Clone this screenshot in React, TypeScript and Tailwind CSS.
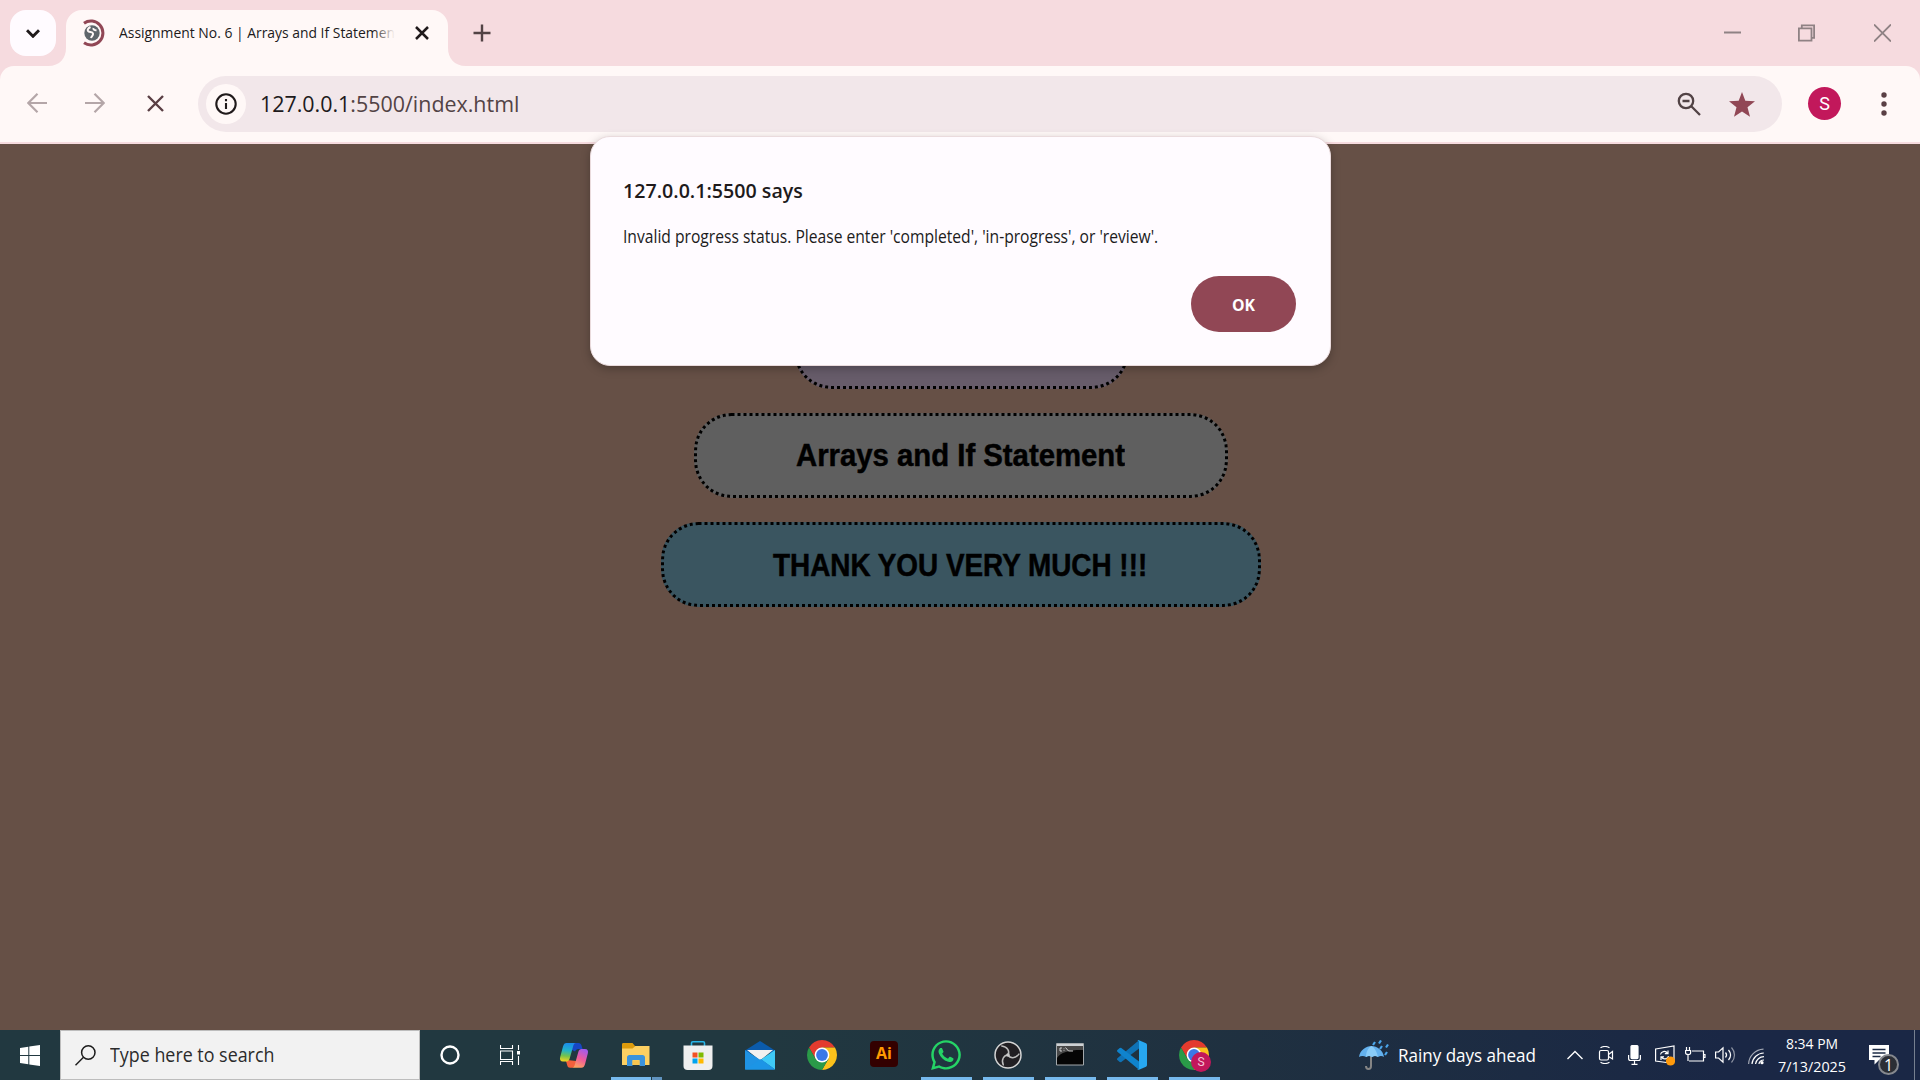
import React, { useLayoutEffect, useRef, useState } from "react";
import { FaWhatsapp } from "react-icons/fa";

/** A single line of text, condensed or widened to fill exactly `w` pixels. */
function Line({ w, className = "", children }: { w: number; className?: string; children: React.ReactNode }) {
  const ref = useRef<HTMLSpanElement>(null);
  const [scale, setScale] = useState(1);
  useLayoutEffect(() => {
    if (ref.current) setScale(w / ref.current.offsetWidth);
  }, [w]);
  return (
    <span className={"block shrink-0 whitespace-nowrap " + className} style={{ width: w }}>
      <span ref={ref} className="inline-block origin-left" style={{ transform: `scaleX(${scale})` }}>
        {children}
      </span>
    </span>
  );
}

function ChromeLogo() {
  return (
    <svg width="30" height="30" viewBox="0 0 30 30">
      <path d="M2.01 7.5A15 15 0 0 1 27.99 7.5H15L8.5 18.75Z" fill="#e33b2e" />
      <path d="M27.99 7.5A15 15 0 0 1 15 30L21.5 18.75 15 7.5Z" fill="#fcc21b" />
      <path d="M15 30A15 15 0 0 1 2.01 7.5L8.5 18.75H21.5Z" fill="#2a9a48" />
      <circle cx="15" cy="15" r="7.4" fill="#fff" />
      <circle cx="15" cy="15" r="5.9" fill="#3b78e7" />
    </svg>
  );
}

function Copilot() {
  return (
    <svg width="30" height="30" viewBox="0 0 30 30">
      <defs>
        <linearGradient id="cpL" x1="0.4" y1="0" x2="0.3" y2="1">
          <stop offset="0" stopColor="#1b8bea" />
          <stop offset="0.4" stopColor="#22b3c9" />
          <stop offset="0.7" stopColor="#75c24c" />
          <stop offset="1" stopColor="#f6d51f" />
        </linearGradient>
        <linearGradient id="cpR" x1="0.7" y1="0" x2="0.3" y2="1">
          <stop offset="0" stopColor="#a25bec" />
          <stop offset="0.5" stopColor="#ee5a9c" />
          <stop offset="1" stopColor="#ffa45c" />
        </linearGradient>
      </defs>
      <path d="M11 3h8.500c1.700 0 2.500 1 3 2.500L23.600 9h-4c-2 0-3 1-3.500 2.500L13 10Z" fill="#1746c4" />
      <path d="M8 20l9.500 1-1.500 5c-.5 1.300-1.300 1.700-2.500 1.700h-2.500c-1.500 0-2.300-1-2.700-2.300L7 21Z" fill="#f4603c" />
      <path d="M7.500 3h9.500c-1.500 0-2.200 1.200-2.700 2.800L10.700 18.500C10.200 20.500 9 21.500 7.500 21.500H4C1.500 21.500.4 19.700 1.200 17L4 6.500C4.700 4 5.800 3 7.500 3Z" fill="url(#cpL)" />
      <path d="M22.500 27.700H13c1.500 0 2.200-1.200 2.700-2.800L19.300 12c.5-2 1.700-3 3.200-3H26c2.500 0 3.600 1.800 2.800 4.500L26 24.200C25.300 26.700 24.200 27.700 22.500 27.700Z" fill="url(#cpR)" />
    </svg>
  );
}

function Explorer() {
  return (
    <svg width="30" height="30" viewBox="0 0 30 30">
      <path d="M1 4.500c0-.8.500-1.500 1.300-1.500h9.200l2.500 3H27v5H1Z" fill="#dd9b0c" />
      <path d="M1 8.500h10.500L14.500 6H28.500V25H1Z" fill="#fdd062" />
      <path d="M6 26V17.500C6 16 7 15 8.500 15h13c1.500 0 2.500 1 2.500 2.500V26h-5.500v-6h-7v6Z" fill="#3b93dc" />
      <path d="M11.500 20.500h7v4.500h-7Z" fill="#f7c650" />
    </svg>
  );
}

function Store() {
  return (
    <svg width="30" height="30" viewBox="0 0 30 30">
      <path d="M8.500 7V3c0-1 .4-1.300 1.300-1.300h10.400c.9 0 1.300.3 1.300 1.300v4" fill="none" stroke="#28b5e8" strokeWidth="1.600" />
      <path d="M.5 5.500h29V26c0 2.500-1.500 4-4 4h-21c-2.500 0-4-1.500-4-4Z" fill="#efefef" />
      <path d="M9.500 12.500h5v5h-5Z" fill="#f25022" />
      <path d="M15.500 12.500h5v5h-5Z" fill="#7fba00" />
      <path d="M9.500 18.500h5v5h-5Z" fill="#00a4ef" />
      <path d="M15.500 18.500h5v5h-5Z" fill="#ffb900" />
    </svg>
  );
}

function Mail() {
  return (
    <svg width="30" height="30" viewBox="0 0 30 30">
      <path d="M0 10.500L15 1l15 9.500V13H0Z" fill="#0b5bab" />
      <path d="M2 10h26L15 20.500Z" fill="#f3f1f0" />
      <path d="M0 10L30 29.500H0Z" fill="#1f93e4" />
      <path d="M30 10V29.500L16 19.500Z" fill="#3fcaf7" />
      <path d="M0 29.500L16 19 30 29.500Z" fill="#1c95e6" />
    </svg>
  );
}

function Obs() {
  return (
    <svg width="30" height="30" viewBox="0 0 30 30">
      <circle cx="15" cy="15" r="13" fill="#211f23" stroke="#d4d4d4" strokeWidth="1.500" />
      <g fill="none" stroke="#bdbdbd" strokeWidth="1.500" strokeLinecap="round">
        <path d="M15 15C17 11.500 14.500 6.500 8.800 6" />
        <path d="M15 15C17 11.500 14.500 6.500 8.800 6" transform="rotate(120 15 15)" />
        <path d="M15 15C17 11.500 14.500 6.500 8.800 6" transform="rotate(240 15 15)" />
      </g>
      <circle cx="15" cy="15" r="1.800" fill="#c9c9c9" />
    </svg>
  );
}

function Terminal() {
  return (
    <svg width="30" height="30" viewBox="0 0 30 30">
      <path d="M1.500 3.500h27v21.500h-27Z" fill="#050505" stroke="#a3a8ab" strokeWidth="1" />
      <path d="M2 6h26v4C17 9.500 5 12 2 18Z" fill="#474747" />
      <path d="M2 4h26v2H2Z" fill="#cdd1d4" />
      <path d="M7 8H5v3h2M9 8.500v.7M9 10.300v.7M10.500 7.500l3 3.500M13.500 11h4.500" fill="none" stroke="#ddd" strokeWidth="0.900" />
    </svg>
  );
}

function VsCode() {
  return (
    <svg width="30" height="30" viewBox="0 0 30 30">
      <path d="M22 0.300V8.500L4 22.200 2.700 22 .4 20c-.5-.5-.5-1.200 0-1.700Z" fill="#0f72b5" />
      <path d="M22 29.700V21.500L4 7.800 2.700 8 .4 10c-.5.500-.5 1.200 0 1.700Z" fill="#0f83cd" />
      <path d="M22 .2L29 3.300c.7.400 1 .9 1 1.700v20c0 .8-.3 1.300-1 1.700L22 29.800c-.8.300-1.300.1-1.800-.4C21.500 30 22 29 22 28V2C22 1 21.500 0 20.200.6 20.700.1 21.200-.1 22 .2Z" fill="#27a7f0" />
    </svg>
  );
}

function AppCell({ running, children }: { running?: boolean; children?: React.ReactNode }) {
  return (
    <div className="relative flex h-full w-[62px] shrink-0 items-center justify-center">
      {children}
      {running && <span className="absolute bottom-0 left-[6px] h-[3px] w-[51px] bg-[#76b9ed]" />}
    </div>
  );
}

function TabStrip() {
  return (
    <div className="flex h-[66px] shrink-0 bg-[#f6dbdf]">
      <div className="ml-[10px] mt-[10px] flex h-[46px] w-[46px] items-center justify-center rounded-2xl bg-[#fffbff]">
        <svg width="14" height="9" viewBox="0 0 14 9" fill="none" stroke="#201a1b" strokeWidth="2.900">
          <path d="M1 1.300l6 6 6-6" />
        </svg>
      </div>
      <svg className="-ml-2 mt-auto" width="18" height="18" viewBox="0 0 18 18">
        <path d="M18 0v18H0C12 18 18 10 18 0Z" fill="#fff8f7" />
      </svg>
      <div className="mt-[10px] flex h-[56px] w-[382px] items-start rounded-t-[16px] bg-[#fff8f7] pl-[17px]">
        <svg className="mt-[9px] shrink-0" width="24" height="28" viewBox="0 0 24 28">
          <circle cx="9" cy="14" r="7.700" fill="#5f666b" />
          <path d="M7.500 8c-2 1-3.500 2.500-2.500 4s4.500.5 5 2.500-1.500 2.500-2 4.500M10.500 9c-.5 1.500 1 2.500 3 2.300" fill="none" stroke="#fff8f7" strokeWidth="2" />
          <path d="M1 4.200A12 12 0 1 1 1 23.800" fill="none" stroke="#914755" strokeWidth="3" />
        </svg>
        <div className="relative ml-[12px] mt-[10px] w-[276px] overflow-hidden text-[15px] leading-[24px] text-[#201a1b]">
          <Line w={276}>Assignment No. 6 | Arrays and If Statemen</Line>
          <span className="absolute right-0 top-0 h-full w-[22px] bg-gradient-to-r from-[#fff8f7]/0 to-[#fff8f7]" />
        </div>
        <svg className="ml-[20px] mt-[16px]" width="14" height="14" viewBox="0 0 14 14" stroke="#201a1b" strokeWidth="2.500">
          <path d="M1 1l12 12M13 1L1 13" />
        </svg>
      </div>
      <svg className="mt-auto" width="18" height="18" viewBox="0 0 18 18">
        <path d="M0 0v18H18C6 18 0 10 0 0Z" fill="#fff8f7" />
      </svg>
      <svg className="ml-[7px] mt-[24px]" width="18" height="18" viewBox="0 0 18 18" stroke="#524345" strokeWidth="2.400">
        <path d="M9 .5v17M.5 9h17" />
      </svg>
      <div className="ml-auto mr-[29px] flex h-[65px] items-center gap-[57px] text-[#8f8284]">
        <svg width="17" height="18" viewBox="0 0 17 18" stroke="currentColor" strokeWidth="2">
          <path d="M0 8.500h17" />
        </svg>
        <svg width="17" height="18" viewBox="0 0 17 18" fill="none" stroke="currentColor" strokeWidth="1.800">
          <path d="M.9 4.300h12.600v12.400H.9ZM3.800 4V1.300h12.300v12.500H14" />
        </svg>
        <svg className="ml-[2px]" width="17" height="18" viewBox="0 0 17 18" stroke="currentColor" strokeWidth="1.900">
          <path d="M0 .5l17 17M17 .5L0 17.500" />
        </svg>
      </div>
    </div>
  );
}

function Toolbar() {
  return (
    <div className="h-[78px] shrink-0 bg-[#f6dbdf]">
      <div className="flex h-[76px] items-center rounded-t-[14px] bg-[#fff8f7]">
        <svg className="-mt-[2px] ml-[27px]" width="20" height="20" viewBox="0 0 20 20" fill="none" stroke="#b4a6a8" strokeWidth="2.200">
          <path d="M20 10H1.500M10.500 .8L1.300 10l9.200 9.200" />
        </svg>
        <svg className="-mt-[2px] ml-[38px]" width="20" height="20" viewBox="0 0 20 20" fill="none" stroke="#b4a6a8" strokeWidth="2.200">
          <path d="M0 10h18.500M9.500 .8l9.200 9.200-9.200 9.200" />
        </svg>
        <svg className="-mt-[2px] ml-[42px]" width="17" height="17" viewBox="0 0 17 17" stroke="#5a3f44" strokeWidth="2.400">
          <path d="M1 1l15 15M16 1L1 16" />
        </svg>
        <div className="ml-[34px] flex h-[56px] w-[1584px] items-center rounded-full bg-[#f2e7ea] pl-[8px]">
          <div className="flex h-10 w-10 items-center justify-center rounded-full bg-[#fff8f7]">
            <svg width="22" height="22" viewBox="0 0 22 22" fill="none" stroke="#201a1b" strokeWidth="2.100">
              <circle cx="11" cy="11" r="9.700" />
              <path d="M11 10v6M11 6v2.200" />
            </svg>
          </div>
          <Line w={259} className="-mt-[3px] ml-[14px] text-[22px] leading-[30px] text-[#524345]">
            <span className="text-[#201a1b]">127.0.0.1</span>:5500/index.html
          </Line>
          <svg className="-mt-px ml-auto" width="24" height="24" viewBox="0 0 24 24" fill="none" stroke="#524345" strokeWidth="2.300">
            <circle cx="9" cy="9" r="7.200" />
            <path d="M14.300 14.300L23 23M5.500 9h7" />
          </svg>
          <svg className="ml-[28px] mr-[27px] mt-px" width="26" height="25" viewBox="0 0 26 25">
            <path d="M13 0l3.300 8.800L26 9.200 18.500 15.200 21 24.700 13 19.400 5 24.700 7.500 15.200 0 9.200 9.700 8.800Z" fill="#914755" />
          </svg>
        </div>
        <div className="-mt-px ml-[26px] flex h-[33px] w-[33px] items-center justify-center rounded-full bg-[#c2185b] font-[Roboto] text-[18px] text-white">S</div>
        <svg className="-mt-px ml-[40px]" width="6" height="24" viewBox="0 0 6 24" fill="#5a3f44">
          <circle cx="3" cy="3" r="2.700" />
          <circle cx="3" cy="12" r="2.700" />
          <circle cx="3" cy="21" r="2.700" />
        </svg>
      </div>
    </div>
  );
}

function Page() {
  const pill = "flex h-[85px] items-center justify-center rounded-[37.5px] border-[3px] border-dotted border-black text-[31px] font-bold leading-[40px] text-black font-['Liberation_Sans'] [-webkit-text-stroke:0.5px_black] ";
  return (
    <main className="flex min-h-0 flex-1 flex-col items-center gap-6 bg-[#665046] pl-[2px] pt-[160px]">
      <div className={pill + "w-[335px] bg-[#675c6a]"} />
      <div className={pill + "w-[534px] bg-[#5f5f5f] pr-[2px]"}>
        <Line w={329}>Arrays and If Statement</Line>
      </div>
      <div className={pill + "w-[600px] bg-[#3a5560] pr-[2px] pt-[2px]"}>
        <Line w={374}>THANK YOU VERY MUCH !!!</Line>
      </div>
    </main>
  );
}

function AlertDialog() {
  return (
    <div className="absolute left-[590px] top-[136px] flex h-[230px] w-[741px] flex-col rounded-[20px] border border-[#eadbdd] bg-[#fffbff] pl-[32px] pr-[34px] pt-[37px] text-[#201a1b] shadow-[0_3px_10px_rgba(0,0,0,0.25)]">
      <Line w={180} className="text-[20.500px] font-semibold leading-[32px]">127.0.0.1:5500 says</Line>
      <Line w={535} className="mt-[16px] text-[17.500px] leading-[28px]">
        Invalid progress status. Please enter 'completed', 'in-progress', or 'review'.
      </Line>
      <button className="ml-auto mt-[26px] flex h-[56px] w-[105px] items-center justify-center rounded-full bg-[#914755] pt-[2px] text-[16.500px] font-bold text-white">
        <Line w={23}>OK</Line>
      </button>
    </div>
  );
}

function Tray() {
  return (
    <div className="ml-auto flex h-full items-center text-white">
      <svg width="30" height="31" viewBox="0 0 30 31">
        <path d="M12 11v15c0 4-5 4-5 0" fill="none" stroke="#858585" strokeWidth="2" />
        <path d="M0 17C1 10 7 6 12.500 6S24 10 25 17c-2-1.500-4-1.500-6 0-2-1.500-4-1.500-6 0-2-1.500-4-1.500-6 0-2-1.500-5-1.500-7 0Z" fill="#63b1ee" />
        <path d="M7 17C7 12 9 8 12.500 6 16 8 18 12 19 17c-2-1.500-4-1.500-6 0-2-1.500-4-1.500-6 0Z" fill="#8accf8" />
        <path d="M16 2l-2 3M22 .5l-2 3M29 4.500l-2 3M23 6l-2 3M28 12l-2 3" stroke="#4ba6ea" strokeWidth="2.200" />
      </svg>
      <Line w={138} className="ml-[9px] text-[19px] leading-[28px]">Rainy days ahead</Line>
      <svg className="ml-[31px]" width="16" height="10" viewBox="0 0 16 10" fill="none" stroke="currentColor" strokeWidth="1.400">
        <path d="M.5 9L8 1.500 15.500 9" />
      </svg>
      <svg className="ml-[15px]" width="16" height="18" viewBox="0 0 16 18" fill="none" stroke="currentColor" strokeWidth="1.200">
        <rect x="1.500" y="4.500" width="9" height="9.500" rx="1.500" />
        <path d="M10.500 8.500l4-3v7.500l-4-2.500M2.500 1.800C5 .3 9 .3 11.500 1.800M2.500 16.300C5 17.700 9 17.700 11.500 16.300" />
      </svg>
      <svg className="ml-[14px]" width="13" height="20" viewBox="0 0 13 20" fill="none" stroke="currentColor" strokeWidth="1.200">
        <rect x="3" y="0.600" width="7" height="13" rx="1" fill="currentColor" />
        <path d="M.6 10v3.500c0 1.500 1 2 2 2h7.800c1 0 2-.5 2-2V10M6.500 16v3M3.500 19.300h6" />
      </svg>
      <svg className="ml-[14px]" width="20" height="21" viewBox="0 0 20 21" fill="none" stroke="currentColor" strokeWidth="1.200">
        <path d="M.6 4L19 1v15l-4 2L.6 16ZM5.500 9.500C6 6.500 10.500 5 12.500 8.500M13 5.500v3.200h-3.200M13.500 11c-.5 3-5 4.300-7 1M6 15v-3.200h3" />
        <circle cx="15.500" cy="16" r="4.600" fill="#ff9a0c" stroke="none" />
      </svg>
      <svg className="ml-[10px]" width="21" height="16" viewBox="0 0 21 16" fill="none" stroke="currentColor" strokeWidth="1.200">
        <path d="M4 14h14.500V4H7M18.500 7.500h1.500v3h-1.500M1.500 0v3.500M4.500 0v3.500M.6 3.500h5v2.500C5.600 8 .6 8 .6 6ZM3 8v6" />
      </svg>
      <svg className="ml-[9px]" width="21" height="18" viewBox="0 0 21 18" fill="none" stroke="currentColor" strokeWidth="1.200">
        <path d="M.6 6h3L8 1.800v14.400L3.600 12h-3ZM10.500 6.500c1.300 1.500 1.300 3.500 0 5M13.500 4c2.500 3 2.500 7 0 10" />
        <path d="M16.500 1.500c4 4.500 4 10.500 0 15" opacity="0.500" />
      </svg>
      <svg className="ml-[12px] mt-[3px]" width="17" height="17" viewBox="0 0 17 17" fill="none" stroke="currentColor" strokeWidth="1.200">
        <path d="M.6 16A15.500 15.500 0 0 1 15.500 1.200" opacity="0.600" />
        <path d="M4 16A12 12 0 0 1 15.800 5M7.500 16A8.500 8.500 0 0 1 16 8.700M11 16c0-2 2-4 5-4" />
        <circle cx="14" cy="14.700" r="1.600" fill="currentColor" stroke="none" />
      </svg>
      <div className="ml-[13px] flex w-[68px] flex-col items-center text-[15px] leading-[23px]">
        <Line w={52}>8:34 PM</Line>
        <Line w={68}>7/13/2025</Line>
      </div>
      <div className="relative ml-[23px] mr-[25px] h-5 w-5">
        <svg width="20" height="20" viewBox="0 0 20 20">
          <path d="M0 0h20v15H10l-4.500 4.500V15H0Z" fill="#fff" />
          <path d="M3.500 4.500h13M3.500 8h13M3.500 11.500h8" stroke="#1c2b45" strokeWidth="1.300" />
        </svg>
        <span className="absolute left-[9px] top-[9px] flex h-[21px] w-[21px] items-center justify-center rounded-full border-2 border-[#85888e] bg-[#2b2e35] text-[16px] leading-none">1</span>
      </div>
      <div className="mr-[5px] h-full w-px bg-[#76808f]" />
    </div>
  );
}

function Taskbar() {
  return (
    <footer className="flex h-[50px] shrink-0 items-center bg-gradient-to-r from-[#213840] from-40% via-[#1f3040] via-65% to-[#1a2745] to-90%">
      <div className="flex h-full w-[60px] items-center justify-center">
        <svg width="20" height="21" viewBox="0 0 20 21" fill="#fff">
          <path d="M0 3l8.300-1.200v8.200H0ZM9.300 1.600L20 0v10H9.300ZM0 11h8.300v8.200L0 18ZM9.300 11H20v10L9.300 19.400Z" />
        </svg>
      </div>
      <div className="flex h-full w-[360px] items-center border border-[#bdbdbd] bg-[#f2f2f2]">
        <svg className="ml-[14px]" width="21" height="21" viewBox="0 0 21 21" fill="none" stroke="#1b1b1b" strokeWidth="1.500">
          <circle cx="13.300" cy="7.500" r="6.700" />
          <path d="M8.500 12.300L.5 20.300" />
        </svg>
        <Line w={164} className="ml-[14px] text-[19.500px] leading-[28px] text-[#2b2b2b]">Type here to search</Line>
      </div>
      <div className="flex h-full w-[60px] items-center justify-center">
        <svg width="20" height="20" viewBox="0 0 20 20">
          <circle cx="10" cy="10" r="8.500" fill="none" stroke="#fff" strokeWidth="2.400" />
        </svg>
      </div>
      <div className="flex h-full w-[63px] items-center pl-5">
        <svg width="20" height="20" viewBox="0 0 20 20" fill="none" stroke="#fff" strokeWidth="1.100">
          <path d="M.5 0v3.500h12V0M.5 6h12v8.500H.5ZM.5 20v-3.500h12V20M18.500 0v5M18.500 11v9" />
          <path d="M17 6h3v3.500h-3Z" fill="#fff" stroke="none" />
        </svg>
      </div>
      <AppCell><Copilot /></AppCell>
      <AppCell>
        <Explorer />
        <span className="absolute bottom-0 left-[6px] flex h-[3px] w-[51px] gap-px">
          <span className="w-10 bg-[#76b9ed]" />
          <span className="w-[10px] bg-[#6093bf]" />
        </span>
      </AppCell>
      <AppCell><Store /></AppCell>
      <AppCell><Mail /></AppCell>
      <AppCell><ChromeLogo /></AppCell>
      <AppCell>
        <div className="mb-[3px] flex h-[26px] w-7 items-center justify-center rounded-[4px] bg-[#300] pb-[2px] text-[16px] font-bold leading-none text-[#ff9a00]">
          <Line w={16}>Ai</Line>
        </div>
      </AppCell>
      <AppCell running><FaWhatsapp size={34} color="#25d366" /></AppCell>
      <AppCell running><Obs /></AppCell>
      <AppCell running><Terminal /></AppCell>
      <AppCell running><VsCode /></AppCell>
      <AppCell running>
        <ChromeLogo />
        <span className="absolute left-[28px] top-[22px] flex h-5 w-5 items-center justify-center rounded-full bg-[#c2185b] font-[Roboto] text-[12px] text-[#f5c6d8]">S</span>
      </AppCell>
      <Tray />
    </footer>
  );
}

export default function App() {
  return (
    <div className="relative flex h-[1080px] w-[1920px] flex-col overflow-hidden font-['Open_Sans',sans-serif]">
      <TabStrip />
      <Toolbar />
      <Page />
      <Taskbar />
      <AlertDialog />
    </div>
  );
}
